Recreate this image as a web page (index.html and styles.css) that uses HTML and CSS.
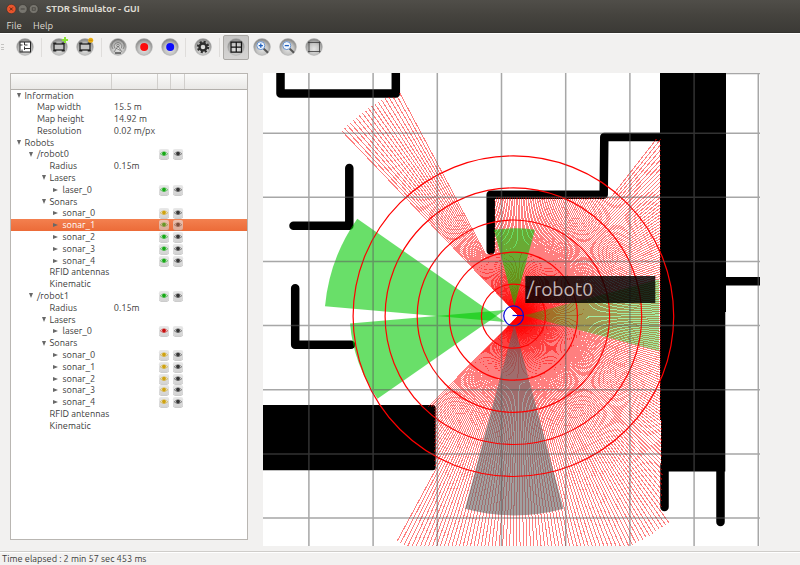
FILE: index.html
```html
<!DOCTYPE html>
<html lang="en">
<head>
<meta charset="utf-8">
<title>STDR Simulator - GUI</title>
<link rel="stylesheet" href="styles.css">
</head>
<body>
<svg class="defs" width="0" height="0">
  <defs>
    <radialGradient id="disc" cx="50%" cy="62%" r="55%">
      <stop offset="0" stop-color="#e6e6e5"/><stop offset=".6" stop-color="#c4c4c3"/><stop offset="1" stop-color="#8b8b8a"/>
    </radialGradient>
    <symbol id="button" viewBox="0 0 18 18"><circle cx="9" cy="9" r="8.4" fill="url(#disc)" stroke="#b5b5b4" stroke-width=".5"/></symbol>
    <symbol id="eye" viewBox="0 0 10 10">
      <path d="M1.300 4.800Q5 .9 8.700 4.800Q5 8.200 1.300 4.800Z" fill="#fff" fill-opacity=".4" stroke="currentColor" stroke-width=".8" stroke-opacity=".7"/>
      <circle cx="5" cy="4.600" r="1.900" fill="currentColor"/>
    </symbol>
    <symbol id="robot" viewBox="0 0 18 18">
      <rect x="4" y="6" width="10" height="6" fill="#c4c4c3" stroke="#222" stroke-width="1.300"/>
      <path d="M3.300 5.200h3M11.700 5.200h3M3.300 12.800h3M11.700 12.800h3" stroke="#222" stroke-width="1.600"/>
    </symbol>
  </defs>
</svg>
<div class="window">
  <header class="titlebar">
    <svg class="controls" viewBox="0 0 36 12">
      <circle cx="5.300" cy="6" r="4.700" fill="#e9552c" stroke="#34322e" stroke-width=".6"/><path d="M3.800 4.500l3 3m0-3l-3 3" stroke="#5d2412" stroke-width="1"/>
      <circle cx="16.700" cy="6" r="4.500" fill="#77756e" stroke="#34322e" stroke-width=".6"/><path d="M14.700 6h4" stroke="#45433e"/>
      <circle cx="27.700" cy="6" r="4.500" fill="#77756e" stroke="#34322e" stroke-width=".6"/><rect x="26.200" y="4.800" width="3" height="2.400" fill="none" stroke="#45433e" stroke-width=".8"/>
    </svg>
    <span class="title">STDR Simulator - GUI</span>
  </header>
  <nav class="menu"><span class="file">File</span><span class="help">Help</span></nav>
  <div class="toolbar">
    <i class="grip"></i>
    <svg class="tool t-map" viewBox="0 0 18 18"><use href="#button"/><rect x="4" y="4" width="10.500" height="10" fill="#fff" stroke="#222"/><path d="M4 7h2.500M8.500 4v3h3M8.500 10.500h6M8.500 8.500v3.500M6 11.500v2.500" fill="none" stroke="#222" stroke-width=".9"/></svg>
    <i class="sep s1"></i>
    <svg class="tool t-add" viewBox="0 0 18 18"><use href="#button"/><use href="#robot"/><path d="M15 -1v6M12 2h6" stroke="#8ae234" stroke-width="2"/></svg>
    <svg class="tool t-remove" viewBox="0 0 18 18"><use href="#button"/><use href="#robot"/><circle cx="14.700" cy="2.200" r="2.500" fill="#eeb111"/><path d="M13 2.200h3.400" stroke="#a87400" stroke-width=".7"/></svg>
    <i class="sep s2"></i>
    <svg class="tool t-rfid" viewBox="0 0 18 18"><use href="#button"/><g fill="none" stroke="#6a6a69" stroke-width=".7"><path d="M4 11a6 6 0 1 1 10 0M5.800 10.400a3.800 3.800 0 1 1 6.400 0M9 8l-4 6M9 8l4 6M6.500 10l5 2.500"/><circle cx="9" cy="7.500" r="1.300"/></g><path d="M6 15h6" stroke="#333" stroke-width="1.200"/></svg>
    <svg class="tool t-red" viewBox="0 0 18 18"><use href="#button"/><circle cx="9.200" cy="9" r="4" fill="#fd0b0b"/></svg>
    <svg class="tool t-blue" viewBox="0 0 18 18"><use href="#button"/><circle cx="9.200" cy="9" r="4" fill="#0b0bfd"/></svg>
    <i class="sep s3"></i>
    <svg class="tool t-gear" viewBox="0 0 18 18"><use href="#button"/><circle cx="9" cy="9" r="5" fill="none" stroke="#2c2c2c" stroke-width="2.400" stroke-dasharray="2 1.927"/><circle cx="9" cy="9" r="3.500" fill="none" stroke="#2c2c2c" stroke-width="2.400"/></svg>
    <i class="sep s4"></i>
    <span class="pressed"><svg class="tool" viewBox="0 0 18 18"><use href="#button"/><path d="M4 4.200h10.500v10H4ZM9.250 4.200v10M4 9.200h10.500" fill="none" stroke="#111" stroke-width="1.200"/></svg></span>
    <svg class="tool t-in" viewBox="0 0 18 18"><use href="#button"/><path d="M10.500 10.500l4.500 4.300" stroke="#555" stroke-width="2"/><circle cx="7.800" cy="7.600" r="4" fill="#f3f7fc" stroke="#6994cf"/><path d="M5.700 7.600h4.200M7.800 5.500v4.200" stroke="#1d5fbf" stroke-width="1.300"/></svg>
    <svg class="tool t-out" viewBox="0 0 18 18"><use href="#button"/><path d="M10.500 10.500l4.500 4.300" stroke="#555" stroke-width="2"/><circle cx="7.800" cy="7.600" r="4" fill="#f3f7fc" stroke="#6994cf"/><path d="M5.700 7.600h4.200" stroke="#1d5fbf" stroke-width="1.300"/></svg>
    <svg class="tool t-fit" viewBox="0 0 18 18"><use href="#button"/><path d="M4 3.500v11M14.500 3.500v11M3 4.500h12.500M3 13.500h12.500" fill="none" stroke="#3a3a3a" stroke-width=".8"/></svg>
  </div>
  <main class="content">
    <section class="tree">
      <div class="cols head"><i></i><i></i><i></i><i></i><i></i></div>
      <div id="rows"></div>
    </section>
    <svg class="map" viewBox="263 73 497 473">
      <rect x="263" y="73" width="497" height="473" fill="#fff"/>
      <g fill="none" stroke="#000" stroke-width="8.500" stroke-linecap="round" stroke-linejoin="round">
        <path d="M280.500 68V93.500H395.800V68"/>
        <path d="M349.300 168V225.800H293.500"/>
        <path d="M295.200 288.300V344.800H351"/>
        <path d="M490.700 250.500V194.800H603.700L604.300 137H664"/>
        <path d="M664.500 465V507M720.500 465V522"/>
      </g>
      <path d="M660 73H726V312H725.300V471.500H661V420H660Z"/>
      <rect x="725" y="277" width="35" height="8.500"/>
      <rect x="255" y="405" width="180.700" height="65.300" rx="3"/>
      <g id="rays" stroke="#f00" stroke-opacity=".5" shape-rendering="crispEdges"></g>
      <path d="M524 315.500L659 279.500V351Z" fill="#00c800" opacity=".36"/>
      <g fill="#00c800" fill-opacity=".59">
        <path d="M505 322L357.300 218.700A180.500 180.500 0 0 0 325 306.300Z"/>
        <path d="M505 310L350 323.500A155 155 0 0 0 377.500 398.700Z"/>
        <path d="M514.400 306L494 229.700Q514.400 227 534.900 229.700Z"/>
      </g>
      <path d="M514.300 325L465 508.800A190 190 0 0 0 563.600 508.800Z" fill="#606060" fill-opacity=".6"/>
      <g fill="none" stroke="#f00" stroke-width="1.200">
        <circle cx="513.400" cy="316.200" r="32"/><circle cx="513.400" cy="316.200" r="64"/><circle cx="513.400" cy="316.200" r="96.200"/><circle cx="513.400" cy="316.200" r="128.300"/><circle cx="513.400" cy="316.200" r="160.300"/>
      </g>
      <g fill="none" stroke="#0a0ad8" stroke-width="1.200"><circle cx="513.600" cy="315.800" r="9.900"/><path d="M512.500 315.500H523.500"/></g>
      <path d="M308.900 73V546M373.100 73V546M437.300 73V546M501.500 73V546M565.700 73V546M629.900 73V546M694.100 73V546M758.300 73V546M263 133.200H760M263 197.300H760M263 261.500H760M263 325.600H760M263 389.800H760M263 453.900H760M263 518H760M726 73.600H760" fill="none" stroke="#5c5c5c" stroke-opacity=".54" stroke-width="1.500"/>
      <rect x="525.300" y="276" width="130" height="27" fill="#000" fill-opacity=".82"/>
      <text x="527" y="296.300" class="label" textLength="66" lengthAdjust="spacingAndGlyphs">/robot0</text>
    </svg>
  </main>
  <footer class="status">Time elapsed : 2 min 57 sec 453 ms</footer>
</div>
<script src="app.js"></script>
</body>
</html>
```
FILE: styles.css
```css
* { box-sizing: border-box; }
body { margin: 0; background: #f2f1f0; color: #3c3c3c; font-family: Ubuntu, "Noto Sans", sans-serif; font-size: 9.250px; overflow: hidden; }
.defs { position: absolute; }
.window { width: 800px; height: 565px; display: flex; flex-direction: column; }
.titlebar { height: 17px; display: flex; align-items: center; background: linear-gradient(#504e49, #44423d); padding-left: 5.500px; }
.controls { width: 36px; height: 12px; }
.title { margin-left: 4.500px; color: #dfdbd2; font-weight: 700; font-size: 9.500px; line-height: 17px; }
.menu { height: 16px; background: linear-gradient(#44423d, #3b3a36); color: #dfdbd2; display: flex; font-size: 9.600px; line-height: 17px; padding-left: 6.500px; border-bottom: 1px solid #33322e; }
.file { width: 26.500px; }
.toolbar { height: 32px; margin-bottom: 8px; display: flex; align-items: center; flex: none; border-top: 1px solid #fff; padding-bottom: 5px; }
.toolbar > * { flex: none; }
.tool { width: 18px; height: 18px; overflow: visible; flex: none; }
.grip { width: 3px; height: 6px; background: repeating-linear-gradient(#c4c3c1 0 1px, transparent 1px 2.500px); margin: 0 12px 0 1px; }
.sep { width: 1px; height: 19px; background: #dfdddb; }
.s1 { margin: 0 8px 0 6.500px; }
.t-remove { margin-left: 8px; }
.s2 { margin: 0 7.500px 0 7px; }
.t-red { margin-left: 8px; }
.t-blue { margin-left: 8px; }
.s3 { margin: 0 8px 0 6px; }
.s4 { margin: 0 3px 0 6.500px; }
.pressed { width: 26px; height: 25px; border: 1px solid #aaa8a5; border-radius: 2px; background: linear-gradient(#c7c6c5, #d5d4d3); display: flex; align-items: center; justify-content: center; }
.t-in { margin-left: 4px; }
.t-out, .t-fit { margin-left: 8px; }
.content { height: 473px; display: flex; flex: none; padding-left: 10px; gap: 15px; }
.tree { width: 238px; height: 467px; background: #fff; border: 1px solid #b9b6b2; }
.cols { display: grid; grid-template-columns: 100.500px 46px 13.500px 13.500px 1fr; }
.head { height: 15.500px; background: linear-gradient(#fafaf9, #e9e8e6); border-bottom: 1px solid #b2afab; }
.head i { border-right: 1px solid #d1cfcc; }
.head i:last-child { border: 0; }
.row { height: 11.810px; line-height: 11.810px; align-items: center; white-space: nowrap; }
.name { display: flex; align-items: center; }
.name::before { content: ""; width: 0; height: 0; margin-right: 4px; border: 2.500px solid transparent; }
.open::before { border-top: 5px solid #686868; border-bottom: 0; }
.closed::before { border-left: 5px solid #686868; border-right: 0; }
.closed::before { margin-left: -1px; margin-right: 5px; }
.d0 { padding-left: 5.500px; } .d1 { padding-left: 18px; } .d2 { padding-left: 30.500px; } .d3 { padding-left: 42.500px; }
.value { padding-left: 2.200px; }
.eye { width: 10px; height: 10px; margin-left: 1.500px; border-radius: 2px; background: linear-gradient(#e9e9e9, #d2d2d2); box-shadow: 0 .5px .5px #999; color: #353535; }
.green { color: #15a915; } .yellow { color: #cfa20f; } .red { color: #c80c0c; }
.selected { background: linear-gradient(#f3804f, #ec6b38); color: #fff; }
.selected .eye { opacity: .62; }
.map { width: 497px; height: 473px; display: block; }
.label { font-family: Ubuntu, "Noto Sans", sans-serif; font-size: 19px; fill: #c3b7b7; }
.status { margin-top: 5px; height: 14px; border-top: 1px solid #cfcdca; box-shadow: inset 0 1px #fff; padding-left: 2px; font-size: 9.250px; line-height: 13px; }
```
FILE: app.js
```js
// Tree rows: depth, state (open / closed / leaf), name, value, eye colour, selected
const sonars = (colours, picked) => colours.map((c, i) => [3, 'closed', 'sonar_' + i, '', c, i === picked]);
const robot = (name, laser, colours, picked) => [
  [1, 'open', name, '', 'green'],
  [2, 'leaf', 'Radius', '0.15m'],
  [2, 'open', 'Lasers', ''],
  [3, 'closed', 'laser_0', '', laser],
  [2, 'open', 'Sonars', ''],
  ...sonars(colours, picked),
  [2, 'leaf', 'RFID antennas', ''],
  [2, 'leaf', 'Kinematic', '']
];
const y = 'yellow', g = 'green';
const rows = [
  [0, 'open', 'Information', ''],
  [1, 'leaf', 'Map width', '15.5 m'],
  [1, 'leaf', 'Map height', '14.92 m'],
  [1, 'leaf', 'Resolution', '0.02 m/px'],
  [0, 'open', 'Robots', ''],
  ...robot('/robot0', 'green', [y, g, g, g, g], 1),
  ...robot('/robot1', 'red', [y, y, y, y, y], -1)
];
const eye = c => `<svg class="eye ${c}" viewBox="0 0 10 10"><use href="#eye"/></svg>`;
document.getElementById('rows').innerHTML = rows.map(([d, state, name, value, colour, sel]) =>
  `<div class="cols row${sel ? ' selected' : ''}"><span class="name d${d} ${state}">${name}</span>` +
  `<span class="value">${value}</span>${colour ? eye(colour) + eye('') : ''}</div>`).join('');

// Laser scan: each ray stops at the nearest wall
const walls = [
  [276, 89.7, 400, 98], [391.5, 73, 400, 98], [486.5, 191, 495, 254.5], [486.5, 191, 608, 198],
  [600, 133, 608, 198], [600, 133, 660, 140], [660, 73, 725, 420], [661.5, 420, 725, 471],
  [661.5, 471, 668, 511], [255, 406, 435, 470]
];
const ox = 518.5, oy = 315.8, range = 256, count = 310, first = -133.7, last = 134.8;
let out = '';
for (let i = 0; i < count; i++) {
  const a = (first + (last - first) * i / (count - 1)) * Math.PI / 180;
  const dx = Math.cos(a), dy = Math.sin(a);
  let t = range;
  for (const [x1, y1, x2, y2] of walls) {
    const tx = [(x1 - ox) / dx, (x2 - ox) / dx].sort((p, q) => p - q);
    const ty = [(y1 - oy) / dy, (y2 - oy) / dy].sort((p, q) => p - q);
    const near = Math.max(tx[0], ty[0]), far = Math.min(tx[1], ty[1]);
    if (near > 0 && near < far) t = Math.min(t, near + 1);
  }
  out += `<line x1="${ox}" y1="${oy}" x2="${(ox + dx * t).toFixed(2)}" y2="${(oy + dy * t).toFixed(2)}"/>`;
}
document.getElementById('rays').innerHTML = out;
```
